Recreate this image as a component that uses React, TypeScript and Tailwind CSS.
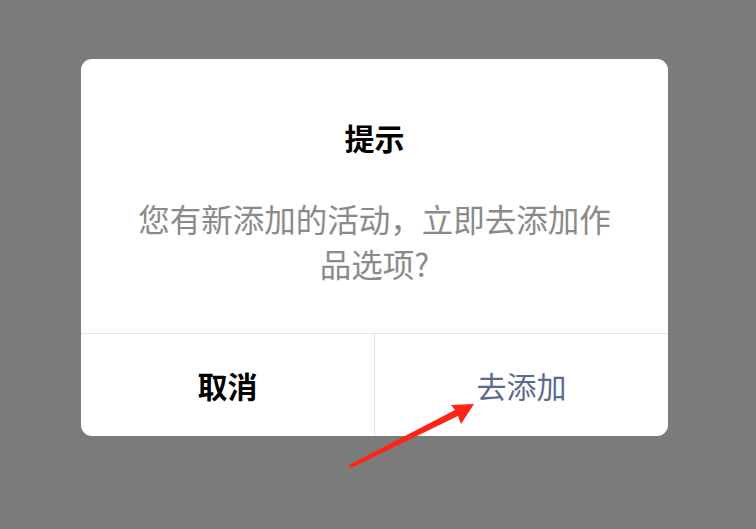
import React from 'react';

const font = { fontFamily: '"Noto Sans CJK SC", "Noto Sans", sans-serif' };

const Arrow = () => (
  <svg className="absolute left-0 top-0 pointer-events-none" width="756" height="529" viewBox="0 0 756 529">
    <polygon
      points="349,465 455,410 451,405 474,404 461,424 458,416 351,468"
      fill="#ff2416"
    />
  </svg>
);

const App = () => {
  return (
    <div className="relative w-[756px] h-[529px] bg-[#7b7b7b] overflow-hidden" style={font}>
      <div className="pt-[59px] pl-[81px]">
        <div className="w-[587px] bg-white rounded-[11px] overflow-hidden">
          <div className="pt-[62px] pb-[47px] px-[48px] text-center">
            <h2 className="text-[30px] leading-[32px] font-bold text-black">提示</h2>
            <p className="mt-[43px] text-[31.5px] leading-[45px] text-[#8a8a8a]">
              您有新添加的活动，立即去添加作品选项?
            </p>
          </div>
          <div className="flex h-[103px] border-t border-[#e6e6e6]">
            <button className="flex-1 flex items-center justify-center text-[30px] font-bold text-black">取消</button>
            <div className="w-px bg-[#e6e6e6]" />
            <button className="flex-1 flex items-center justify-center text-[30px] text-[#5b6a93]">去添加</button>
          </div>
        </div>
      </div>
      <Arrow />
    </div>
  );
};

export default App;
